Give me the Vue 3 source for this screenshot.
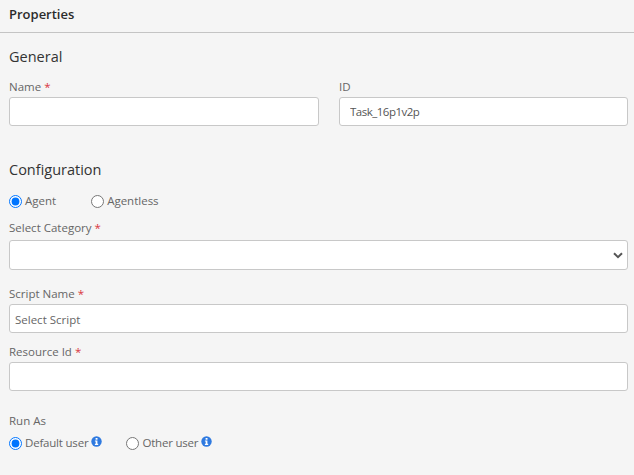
<template>
  <div class="panel">
    <div class="panel-title">Properties</div>

    <form class="panel-body" @submit.prevent>
      <h3 class="section-title first">General</h3>
      <div class="two-cols">
        <div>
          <label class="field-label">Name <span class="req">*</span></label>
          <input type="text" v-model="form.name" class="text-input" />
        </div>
        <div>
          <label class="field-label">ID</label>
          <input type="text" v-model="form.id" class="text-input id-input" />
        </div>
      </div>

      <h3 class="section-title second">Configuration</h3>
      <div class="radio-row agent-row">
        <label class="radio" v-for="m in modes" :key="m">
          <input type="radio" name="mode" :value="m" v-model="form.mode" />
          <span>{{ m }}</span>
        </label>
      </div>

      <label class="field-label category">Select Category <span class="req">*</span></label>
      <div class="select-wrap">
        <select v-model="form.category" class="text-input select-input">
          <option value=""></option>
        </select>
        <svg class="chevron" width="10" height="7" viewBox="0 0 10 7">
          <path d="M1 1.2 L5 5.2 L9 1.2" fill="none" stroke="#555" stroke-width="2" />
        </svg>
      </div>

      <label class="field-label script">Script Name <span class="req">*</span></label>
      <input type="text" v-model="form.script" class="text-input script-input" placeholder="Select Script" />

      <label class="field-label resource">Resource Id <span class="req">*</span></label>
      <input type="text" v-model="form.resource" class="text-input" />

      <label class="field-label runas">Run As</label>
      <div class="radio-row user-row">
        <label class="radio" v-for="u in users" :key="u">
          <input type="radio" name="user" :value="u" v-model="form.user" />
          <span>{{ u }}</span>
          <svg class="info" width="11" height="11" viewBox="0 0 11 11">
            <circle cx="5.5" cy="5.5" r="5.2" fill="#2f7ae0" />
            <rect x="4.6" y="2" width="1.9" height="1.7" fill="#fff" />
            <path d="M3.9 4.5 H6.4 V7.8 H7.2 V8.9 H3.9 V7.8 H4.7 V5.6 H3.9 Z" fill="#fff" />
          </svg>
        </label>
      </div>
    </form>
  </div>
</template>

<script setup>
import { reactive } from 'vue'

const modes = ['Agent', 'Agentless']
const users = ['Default user', 'Other user']

const form = reactive({
  name: '',
  id: 'Task_16p1v2p',
  mode: 'Agent',
  category: '',
  script: '',
  resource: '',
  user: 'Default user',
})
</script>

<style>
html,
body {
  background: #f5f5f5;
}
</style>

<style scoped>
.panel {
  width: 634px;
  height: 475px;
  overflow: hidden;
  background: #f5f5f5;
  font-family: "Open Sans", "Noto Sans", sans-serif;
  font-size: 11.5px;
  color: #666;
}

.panel-title {
  height: 33px;
  box-sizing: border-box;
  padding: 5px 9px 0;
  border-bottom: 1px solid #c4c4c4;
  font-size: 13px;
  line-height: 18px;
  font-weight: 600;
  color: #2b2b2b;
}

.panel-body {
  padding: 0 6px 0 9px;
  display: flex;
  flex-direction: column;
}

.section-title {
  margin: 0;
  font-size: 14.5px;
  line-height: 20px;
  font-weight: 400;
  color: #333;
}

.section-title.first {
  margin-top: 14px;
}

.section-title.second {
  margin-top: 34px;
}

.two-cols {
  display: grid;
  grid-template-columns: 310px 289px;
  gap: 20px;
  margin-top: 12px;
}

.field-label {
  display: block;
  line-height: 16px;
  margin-bottom: 2px;
}

.req {
  color: #d9363e;
}

.text-input {
  display: block;
  width: 100%;
  height: 29px;
  box-sizing: border-box;
  padding: 0 10px;
  background: #fff;
  border: 1px solid #c8c8c8;
  border-radius: 3px;
  font-family: inherit;
  font-size: 11.5px;
  color: #555;
  outline: none;
}

.id-input {
  letter-spacing: -0.5px;
}

.script-input {
  padding: 1px 5px 0;
}

.script-input::placeholder {
  color: #666;
  opacity: 1;
}

.select-wrap {
  position: relative;
}

.select-input {
  height: 30px;
  appearance: none;
}

.chevron {
  position: absolute;
  right: 5px;
  top: 12px;
}

.radio-row {
  display: flex;
}

.agent-row {
  margin-top: 13px;
  gap: 35px;
}

.user-row {
  margin-top: 6px;
  gap: 24px;
  letter-spacing: -0.2px;
}

.radio {
  display: flex;
  align-items: center;
  gap: 3px;
  line-height: 16px;
}

.radio input {
  width: 13px;
  height: 13px;
  margin: 0;
  accent-color: #0075ff;
}

.info {
  margin-top: -3px;
}

.category {
  margin-top: 11px;
  margin-bottom: 4px;
}

.script {
  margin-top: 16px;
  margin-bottom: 2px;
}

.resource {
  margin-top: 11px;
  margin-bottom: 2px;
}

.runas {
  margin-top: 22px;
  margin-bottom: 0;
}
</style>
